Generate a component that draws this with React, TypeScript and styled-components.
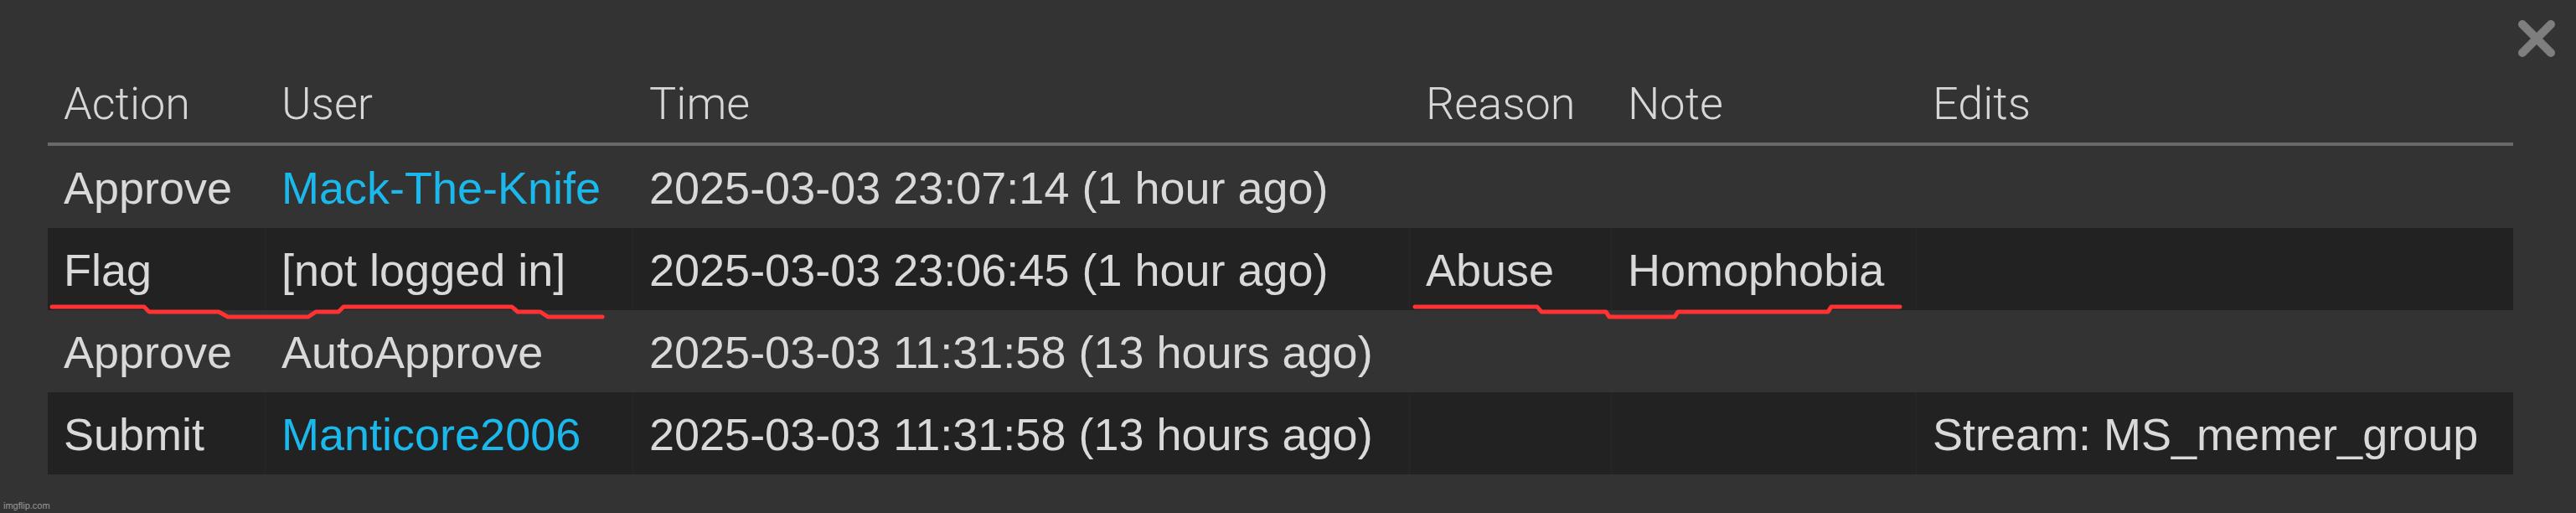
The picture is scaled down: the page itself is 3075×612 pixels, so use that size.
import React from "react";
import styled, { createGlobalStyle } from "styled-components";

const GlobalStyle = createGlobalStyle`
  html, body {
    margin: 0;
    padding: 0;
    background: #333333;
  }
  body {
    font-family: "Liberation Sans", Arial, sans-serif;
  }
`;

const Frame = styled.div`
  position: relative;
  width: 3075px;
  height: 612px;
  box-sizing: border-box;
  padding: 94px 75px 0 57px;
  background: #333333;
  overflow: hidden;
`;

const CloseButton = styled.button`
  position: absolute;
  top: 22px;
  left: 3004px;
  width: 48px;
  height: 48px;
  padding: 0;
  border: none;
  background: transparent;
  cursor: pointer;
  svg {
    display: block;
  }
`;

const LogTable = styled.table`
  width: 2943px;
  table-layout: fixed;
  border-collapse: separate;
  border-spacing: 0;
  font-size: 54px;
  line-height: 60px;
  color: #d9d9d9;
`;

const HeadCell = styled.th`
  padding: 0 0 16px 20px;
  border-bottom: 4px solid #6a6a6a;
  text-align: left;
  font-family: Roboto, "Liberation Sans", sans-serif;
  font-weight: 300;
  color: #d6d6d6;
  white-space: nowrap;
  &:first-child {
    padding-left: 19px;
  }
`;

const Row = styled.tr<{ $dark: boolean }>`
  background: ${(p) => (p.$dark ? "#222222" : "#333333")};
`;

const Cell = styled.td<{ $dark: boolean }>`
  height: 60px;
  padding: 20px 0 18px 19px;
  border-left: 1px solid
    ${(p) => (p.$dark ? "rgba(255, 255, 255, 0.025)" : "transparent")};
  white-space: nowrap;
  vertical-align: top;
  &:first-child {
    border-left: none;
  }
`;

const UserLink = styled.a`
  color: #1bb8ec;
  text-decoration: none;
`;

const Scribbles = styled.svg`
  position: absolute;
  top: 0;
  left: 0;
  pointer-events: none;
`;

const Watermark = styled.div`
  position: absolute;
  left: 4px;
  bottom: 3px;
  font-size: 11px;
  line-height: 12px;
  color: #9a9a9a;
`;

type Entry = {
  action: string;
  user: string;
  linked: boolean;
  time: string;
  reason?: string;
  note?: string;
  edits?: string;
};

const entries: Entry[] = [
  { action: "Approve", user: "Mack-The-Knife", linked: true, time: "2025-03-03 23:07:14 (1 hour ago)" },
  {
    action: "Flag",
    user: "[not logged in]",
    linked: false,
    time: "2025-03-03 23:06:45 (1 hour ago)",
    reason: "Abuse",
    note: "Homophobia",
  },
  { action: "Approve", user: "AutoApprove", linked: false, time: "2025-03-03 11:31:58 (13 hours ago)" },
  {
    action: "Submit",
    user: "Manticore2006",
    linked: true,
    time: "2025-03-03 11:31:58 (13 hours ago)",
    edits: "Stream: MS_memer_group",
  },
];

const columns = [
  { label: "Action", width: 259 },
  { label: "User", width: 439 },
  { label: "Time", width: 927 },
  { label: "Reason", width: 241 },
  { label: "Note", width: 364 },
  { label: "Edits", width: 713 },
];

export default function App() {
  return (
    <>
      <GlobalStyle />
      <Frame>
        <CloseButton aria-label="Close">
          <svg width="48" height="48" viewBox="0 0 48 48">
            <path
              d="M7 7 L41 41 M41 7 L7 41"
              stroke="#7e7e7e"
              strokeWidth="10"
              strokeLinecap="round"
              fill="none"
            />
          </svg>
        </CloseButton>

        <LogTable>
          <colgroup>
            {columns.map((c) => (
              <col key={c.label} style={{ width: c.width }} />
            ))}
          </colgroup>
          <thead>
            <tr>
              {columns.map((c) => (
                <HeadCell key={c.label}>{c.label}</HeadCell>
              ))}
            </tr>
          </thead>
          <tbody>
            {entries.map((e, i) => {
              const dark = i % 2 === 1;
              return (
                <Row key={i} $dark={dark}>
                  <Cell $dark={dark}>{e.action}</Cell>
                  <Cell $dark={dark}>
                    {e.linked ? <UserLink href="#">{e.user}</UserLink> : e.user}
                  </Cell>
                  <Cell $dark={dark}>{e.time}</Cell>
                  <Cell $dark={dark}>{e.reason}</Cell>
                  <Cell $dark={dark}>{e.note}</Cell>
                  <Cell $dark={dark}>{e.edits}</Cell>
                </Row>
              );
            })}
          </tbody>
        </LogTable>

        <Scribbles width="3075" height="612" viewBox="0 0 3075 612">
          <polyline
            points="62,366 172,366 178,372 261,372 272,378 368,378 377,372 404,372 410,366 611,366 618,372 645,372 654,378 719,378"
            fill="none"
            stroke="#ff3333"
            strokeWidth="5"
            strokeLinecap="round"
            strokeLinejoin="round"
          />
          <polyline
            points="1689,366 1835,366 1840,372 1917,372 1921,378 1999,378 2003,372 2182,372 2186,366 2268,366"
            fill="none"
            stroke="#ff3333"
            strokeWidth="5"
            strokeLinecap="round"
            strokeLinejoin="round"
          />
        </Scribbles>

        <Watermark>imgflip.com</Watermark>
      </Frame>
    </>
  );
}
